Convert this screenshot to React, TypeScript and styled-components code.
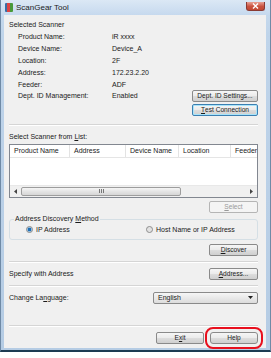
import styled, { createGlobalStyle, css } from 'styled-components'

const GlobalStyle = createGlobalStyle`
  html, body {
    margin: 0;
    padding: 0;
    background: #ffffff;
  }
  body {
    font-family: 'Liberation Sans', Arial, sans-serif;
    font-size: 7px;
    color: #1a1a1a;
  }
`

const columns = [
  { name: 'Product Name', width: 60 },
  { name: 'Address', width: 56 },
  { name: 'Device Name', width: 53 },
  { name: 'Location', width: 52 },
  { name: 'Feeder', width: 40 },
]

const info = [
  ['Product Name:', 'iR xxxx'],
  ['Device Name:', 'Device_A'],
  ['Location:', '2F'],
  ['Address:', '172.23.2.20'],
  ['Feeder:', 'ADF'],
]

export default function App() {
  return (
    <>
      <GlobalStyle />
      <Frame>
        <TitleBar>
          <AppIcon />
          <Title>ScanGear Tool</Title>
          <CloseButton>
            <svg width="7" height="6" viewBox="0 0 7 6">
              <path d="M1 0.5 L6 5.5 M6 0.5 L1 5.5" stroke="#fff" strokeWidth="1.4" />
            </svg>
          </CloseButton>
        </TitleBar>
        <Client>
          <SectionLabel>Selected Scanner</SectionLabel>
          <InfoGrid>
            {info.map(([label, value]) => (
              <InfoRow key={label}>
                <InfoLabel>{label}</InfoLabel>
                <InfoValue>{value}</InfoValue>
              </InfoRow>
            ))}
            <InfoRow>
              <InfoLabel>Dept. ID Management:</InfoLabel>
              <InfoValue>Enabled</InfoValue>
              <Button w={66}>Dept. ID Settings...</Button>
            </InfoRow>
          </InfoGrid>
          <ButtonRow mt={2}>
            <Button w={66} focused>
              <u>T</u>est Connection
            </Button>
          </ButtonRow>
          <Separator mt={8} />

          <SectionLabel mt={5}>
            Select Scanner from <u>L</u>ist:
          </SectionLabel>
          <ListBox>
            <ListHeader>
              {columns.map((c) => (
                <HeaderCell key={c.name} w={c.width}>
                  {c.name}
                </HeaderCell>
              ))}
            </ListHeader>
            <ListBody />
            <HScroll>
              <ScrollArrow>
                <svg width="3" height="5" viewBox="0 0 3 5">
                  <path d="M3 0 L0 2.5 L3 5 Z" fill="#444" />
                </svg>
              </ScrollArrow>
              <ScrollTrack>
                <ScrollThumb>
                  <Grip />
                </ScrollThumb>
              </ScrollTrack>
              <ScrollArrow>
                <svg width="3" height="5" viewBox="0 0 3 5">
                  <path d="M0 0 L3 2.5 L0 5 Z" fill="#444" />
                </svg>
              </ScrollArrow>
            </HScroll>
          </ListBox>
          <ButtonRow mt={3}>
            <Button w={49} disabled>
              <u>S</u>elect
            </Button>
          </ButtonRow>

          <GroupBox>
            <GroupLegend>
              Address Discovery <u>M</u>ethod
            </GroupLegend>
            <RadioRow>
              <RadioItem>
                <Radio checked />
                IP Address
              </RadioItem>
              <RadioItem>
                <Radio />
                Host Name or IP Address
              </RadioItem>
            </RadioRow>
          </GroupBox>
          <ButtonRow mt={4}>
            <Button w={49}>
              <u>D</u>iscover
            </Button>
          </ButtonRow>
          <Separator mt={5} />

          <OptionRow>
            <OptionLabel>Specify with Address</OptionLabel>
            <Button w={49}>
              <u>A</u>ddress...
            </Button>
          </OptionRow>
          <Separator mt={5} />

          <OptionRow>
            <OptionLabel>
              Change La<u>n</u>guage:
            </OptionLabel>
            <Select>
              <span>English</span>
              <svg width="5" height="3" viewBox="0 0 5 3">
                <path d="M0 0 L5 0 L2.5 3 Z" fill="#222" />
              </svg>
            </Select>
          </OptionRow>
          <Separator mt={21} />

          <FooterRow>
            <Button w={48}>
              E<u>x</u>it
            </Button>
            <Button w={48} highlight>
              Help
            </Button>
          </FooterRow>
        </Client>
      </Frame>
    </>
  )
}

const Frame = styled.div`
  width: 271px;
  height: 352px;
  box-sizing: border-box;
  background: linear-gradient(180deg, #c9dcef 0%, #bfd4ea 10%, #b5cce4 100%);
  border-left: 1px solid #6f8aa6;
  border-right: 1px solid #6f8aa6;
  border-bottom: 2px solid #1d3b52;
  padding: 0 4px 2px 3px;
  display: flex;
  flex-direction: column;
`

const TitleBar = styled.div`
  height: 15px;
  display: flex;
  align-items: center;
  gap: 3px;
  background: linear-gradient(180deg, #dbe8f5 0%, #c6d9ee 100%);
  margin: 0 -4px 0 -3px;
  padding: 0 5px 0 4px;
`

const AppIcon = styled.div`
  width: 8px;
  height: 9px;
  background: linear-gradient(90deg, #3a6ea5 0 30%, #d44 30% 60%, #4a9a3a 60% 100%);
  border-radius: 1px;
`

const Title = styled.span`
  font-size: 8px;
  color: #1b1b1b;
  flex: 1;
`

const CloseButton = styled.div`
  width: 17px;
  height: 8px;
  margin-top: -2px;
  border: 1px solid #8a3a33;
  border-top: none;
  border-radius: 0 0 3px 3px;
  background: linear-gradient(180deg, #e8a296 0%, #c9523f 55%, #c14834 100%);
  display: flex;
  align-items: center;
  justify-content: center;
`

const Client = styled.div`
  flex: 1;
  background: #f0f0f0;
  padding: 4px 8px 0 5px;
  display: flex;
  flex-direction: column;
`

const SectionLabel = styled.div<{ mt?: number }>`
  height: 11px;
  line-height: 11px;
  margin-top: ${(p) => p.mt ?? 0}px;
`

const InfoGrid = styled.div`
  display: flex;
  flex-direction: column;
  margin-top: 1px;
`

const InfoRow = styled.div`
  height: 11.8px;
  display: flex;
  align-items: center;
  padding-left: 9px;
`

const InfoLabel = styled.span`
  width: 94px;
`

const InfoValue = styled.span`
  flex: 1;
`

const ButtonRow = styled.div<{ mt?: number }>`
  display: flex;
  justify-content: flex-end;
  margin-top: ${(p) => p.mt ?? 0}px;
`

const Button = styled.div<{ w: number; focused?: boolean; disabled?: boolean; highlight?: boolean }>`
  width: ${(p) => p.w}px;
  height: 12px;
  box-sizing: border-box;
  border: 1px solid #8a8a8a;
  border-radius: 2px;
  background: linear-gradient(180deg, #f6f6f6 0%, #ebebeb 48%, #dddddd 52%, #cfcfcf 100%);
  display: flex;
  align-items: center;
  justify-content: center;
  font-size: 6.6px;
  color: #1a1a1a;
  white-space: nowrap;
  ${(p) =>
    p.focused &&
    css`
      border-color: #3c7fb1;
      box-shadow: inset 0 0 0 1px #a8e4fa;
    `}
  ${(p) =>
    p.disabled &&
    css`
      border-color: #b5b5b5;
      background: #f4f4f4;
      color: #9a9a9a;
    `}
  ${(p) =>
    p.highlight &&
    css`
      outline: 2px solid #e8101e;
      outline-offset: 3px;
      border-radius: 3px;
    `}
  u {
    text-decoration-thickness: 0.5px;
  }
`

const Separator = styled.div<{ mt?: number }>`
  height: 0;
  border-top: 1px solid #d5d5d5;
  border-bottom: 1px solid #ffffff;
  margin-top: ${(p) => p.mt ?? 0}px;
`

const ListBox = styled.div`
  margin-top: 2px;
  height: 54px;
  box-sizing: border-box;
  border: 1px solid #828790;
  background: #ffffff;
  display: flex;
  flex-direction: column;
`

const ListHeader = styled.div`
  height: 12px;
  display: flex;
  border-bottom: 1px solid #e5e5e5;
  overflow: hidden;
`

const HeaderCell = styled.div<{ w: number }>`
  width: ${(p) => p.w}px;
  flex-shrink: 0;
  box-sizing: border-box;
  padding-left: 4px;
  line-height: 12px;
  border-right: 1px solid #e3e3e3;
  color: #222;
  white-space: nowrap;
`

const ListBody = styled.div`
  flex: 1;
`

const HScroll = styled.div`
  height: 11px;
  display: flex;
  align-items: center;
  background: #f0f0f0;
  border-top: 1px solid #e8e8e8;
`

const ScrollArrow = styled.div`
  width: 11px;
  display: flex;
  align-items: center;
  justify-content: center;
`

const ScrollTrack = styled.div`
  flex: 1;
  height: 9px;
  display: flex;
  align-items: center;
`

const ScrollThumb = styled.div`
  width: 160px;
  height: 9px;
  box-sizing: border-box;
  border: 1px solid #9d9d9d;
  border-radius: 2px;
  background: linear-gradient(180deg, #f5f5f5 0%, #e4e4e4 50%, #d6d6d6 100%);
  display: flex;
  align-items: center;
  justify-content: center;
`

const Grip = styled.div`
  width: 5px;
  height: 4px;
  background: repeating-linear-gradient(90deg, #777 0 1px, transparent 1px 2px);
`

const GroupBox = styled.div`
  position: relative;
  margin-top: 6px;
  height: 21px;
  box-sizing: border-box;
  border: 1px solid #d5dfe5;
  border-radius: 3px;
  display: flex;
  align-items: flex-start;
  padding-top: 6px;
`

const GroupLegend = styled.span`
  position: absolute;
  top: -6px;
  left: 4px;
  padding: 0 1px;
  background: #f0f0f0;
  line-height: 10px;
`

const RadioRow = styled.div`
  display: flex;
  width: 100%;
  padding-left: 16px;
`

const RadioItem = styled.div`
  width: 120px;
  display: flex;
  align-items: center;
  gap: 3px;
`

const Radio = styled.div<{ checked?: boolean }>`
  width: 7px;
  height: 7px;
  box-sizing: border-box;
  border-radius: 50%;
  border: 1px solid #8a8a8a;
  background: ${(p) =>
    p.checked
      ? 'radial-gradient(circle, #1f6fb5 0 1.6px, #8fc0e8 2px, #e8e8e8 3px)'
      : 'radial-gradient(circle, #e2e2e2 0 2px, #f6f6f6 3px)'};
`

const OptionRow = styled.div`
  display: flex;
  align-items: center;
  justify-content: space-between;
  margin-top: 5px;
`

const OptionLabel = styled.span``

const Select = styled.div`
  width: 105px;
  height: 12px;
  box-sizing: border-box;
  border: 1px solid #8a8a8a;
  border-radius: 2px;
  background: linear-gradient(180deg, #f6f6f6 0%, #e9e9e9 50%, #dcdcdc 100%);
  display: flex;
  align-items: center;
  justify-content: space-between;
  padding: 0 4px;
`

const FooterRow = styled.div`
  display: flex;
  justify-content: flex-end;
  gap: 6px;
  margin-top: 5px;
`
